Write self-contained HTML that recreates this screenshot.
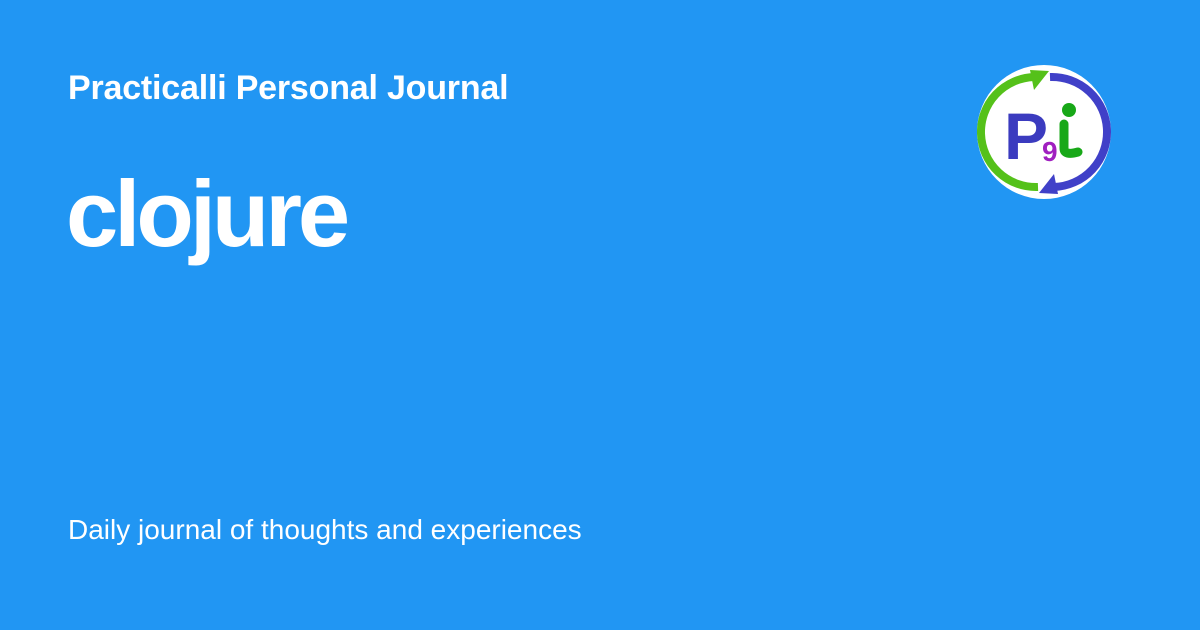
<!DOCTYPE html>
<html><head><meta charset="utf-8"><style>
html,body{margin:0;padding:0}
body{width:1200px;height:630px;background:#2196f3;position:relative;overflow:hidden;font-family:"Liberation Sans",sans-serif;color:#fff}
.t{position:absolute;left:68px;top:69px;font-size:34px;font-weight:bold;white-space:nowrap;letter-spacing:-0.2px}
.c{position:absolute;left:66px;top:160px;font-size:94px;font-weight:bold;letter-spacing:-4px;white-space:nowrap}
.d{position:absolute;left:68px;top:514px;font-size:28px;white-space:nowrap}
svg{position:absolute;left:976px;top:64px}
</style></head><body>
<div class="t">Practicalli Personal Journal</div>
<div class="c">clojure</div>
<div class="d">Daily journal of thoughts and experiences</div>
<svg width="136" height="136" viewBox="0 0 136 136">
<circle cx="68" cy="68" r="67" fill="#fff"/>
<path d="M62 123 A55 55 0 0 1 58 13" fill="none" stroke="#55c11a" stroke-width="8"/>
<path d="M54 6 L73 7 L58 26 Z" fill="#55c11a"/>
<path d="M74 13 A55 55 0 0 1 78 123" fill="none" stroke="#4040c8" stroke-width="8"/>
<path d="M82 130 L63 129 L78 110 Z" fill="#4040c8"/>
<text x="28" y="95" font-family="Liberation Sans,sans-serif" font-weight="bold" font-size="66" fill="#3b3bbf">P</text>
<text x="66" y="97" font-family="Liberation Sans,sans-serif" font-weight="bold" font-size="28" fill="#a020c0">9</text>
<circle cx="93" cy="46" r="7" fill="#18a818"/>
<path d="M88 60 L88 84 Q88 92 102 88" fill="none" stroke="#18a818" stroke-width="9" stroke-linecap="round"/>
</svg>
</body></html>
